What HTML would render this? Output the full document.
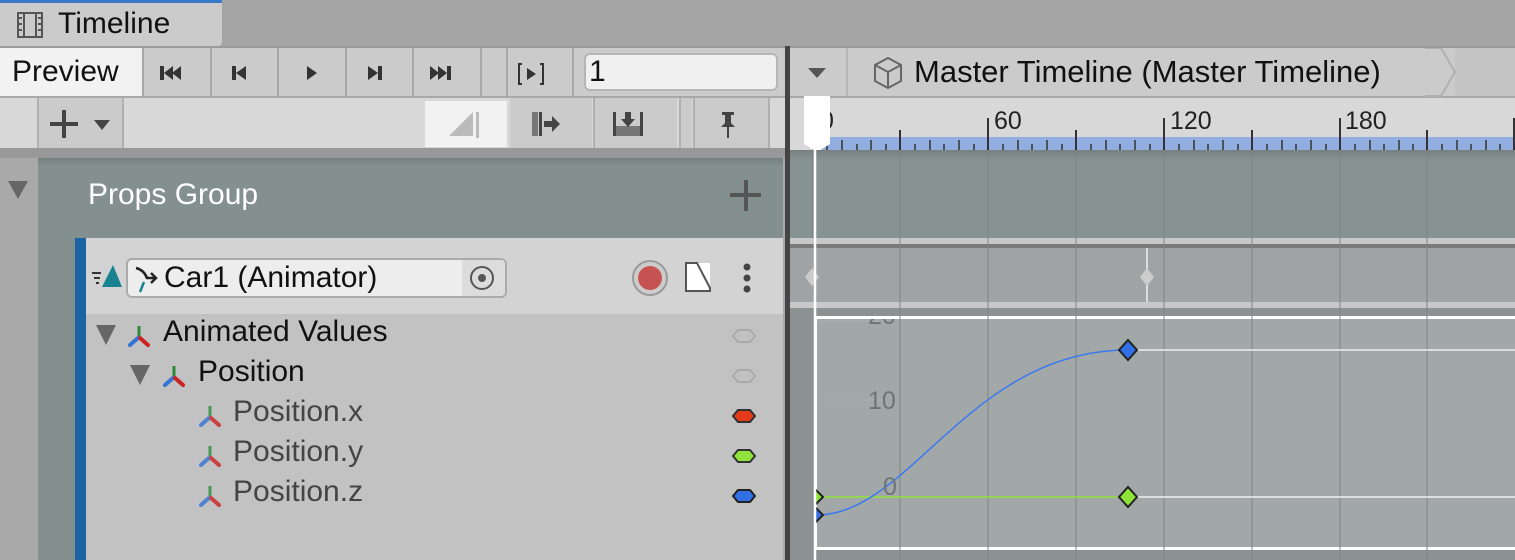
<!DOCTYPE html>
<html><head><style>
*{margin:0;padding:0;box-sizing:border-box}
body{width:1515px;height:560px;overflow:hidden;background:#a5a5a5;font-family:"Liberation Sans",sans-serif;position:relative}
.a{position:absolute}
.t{font-size:30px;color:#111;white-space:nowrap;line-height:34px}
.sep{position:absolute;width:2px;background:#a8a8a8}
.n{font-size:25px;line-height:28px}
</style></head><body>
<!-- tab -->
<div class="a" style="left:0;top:0;width:222px;height:46px;background:#cbcbcb;border-top:3px solid #3a78c9;border-radius:0 0 4px 0"></div>
<svg class="a" style="left:16px;top:11px" width="30" height="28"><rect x="2" y="2" width="24" height="24" fill="none" stroke="#555" stroke-width="2"/><rect x="8" y="2" width="12" height="24" fill="#cbcbcb" stroke="#555" stroke-width="2"/><g fill="#555"><rect x="3" y="6" width="3" height="2"/><rect x="3" y="12" width="3" height="2"/><rect x="3" y="18" width="3" height="2"/><rect x="22" y="6" width="3" height="2"/><rect x="22" y="12" width="3" height="2"/><rect x="22" y="18" width="3" height="2"/></g></svg>
<div class="a t" style="left:58px;top:7px">Timeline</div>
<!-- row1 -->
<div class="a" style="left:0;top:46px;width:1515px;height:52px;background:#cbcbcb;border-top:2px solid #9a9a9a;border-bottom:2px solid #a8a8a8"></div>
<div class="a" style="left:0;top:48px;width:142px;height:48px;background:#f2f2f2"></div>
<div class="a t" style="left:12px;top:55px">Preview</div>
<div class="sep" style="left:142px;top:48px;height:48px"></div>
<div class="sep" style="left:210px;top:48px;height:48px"></div>
<div class="sep" style="left:277px;top:48px;height:48px"></div>
<div class="sep" style="left:345px;top:48px;height:48px"></div>
<div class="sep" style="left:412px;top:48px;height:48px"></div>
<div class="sep" style="left:480px;top:48px;height:48px"></div>
<div class="sep" style="left:506px;top:48px;height:48px"></div>
<div class="sep" style="left:572px;top:48px;height:48px"></div>
<svg class="a" style="left:150px;top:58px" width="640" height="30" fill="#333">
<g transform="translate(10,5)"><rect x="0" y="3" width="4" height="14"/><path d="M4 10 L13 3 V17Z M12 10 L21 3 V17Z"/></g>
<g transform="translate(82,5)"><rect x="0" y="3" width="4" height="14"/><path d="M4 10 L14 3 V17Z"/></g>
<path d="M157 8 L167 15 L157 22Z"/>
<g transform="translate(218,5)"><path d="M0 3 L10 10 L0 17Z"/><rect x="10" y="3" width="4" height="14"/></g>
<g transform="translate(280,5)"><path d="M0 3 L9 10 L0 17Z M8 3 L17 10 L8 17Z"/><rect x="17" y="3" width="4" height="14"/></g>
<g transform="translate(368,4)" fill="none" stroke="#333" stroke-width="2"><path d="M4 2 H1 V22 H4 M22 2 H25 V22 H22"/><path d="M9 6 L18 12 L9 18Z" fill="#333" stroke="none"/></g>
</svg>
<div class="a" style="left:584px;top:53px;width:194px;height:38px;background:#f0f0f0;border:2px solid #b5b5b5;border-radius:6px"></div>
<div class="a t" style="left:589px;top:55px">1</div>
<!-- right header row1 -->
<div class="a" style="left:790px;top:48px;width:725px;height:48px;background:#cbcbcb"></div>
<svg class="a" style="left:806px;top:66px" width="22" height="14"><path d="M2 2 H20 L11 12Z" fill="#555"/></svg>
<div class="sep" style="left:846px;top:48px;height:48px;background:#b5b5b5"></div>
<div class="a" style="left:1455px;top:48px;width:60px;height:48px;background:#c4c4c4"></div>
<svg class="a" style="left:1425px;top:48px" width="40" height="50"><path d="M0 0 L16 0 L30 24 L16 48 L0 48" fill="#cbcbcb" stroke="#b0b0b0" stroke-width="2"/></svg>
<svg class="a" style="left:872px;top:55px" width="34" height="36" fill="none" stroke="#666" stroke-width="2"><path d="M16 3 L29 10 V26 L16 33 L3 26 V10Z M3 10 L16 17 L29 10 M16 17 V33"/></svg>
<div class="a t" style="left:914px;top:55px;font-size:31px">Master Timeline (Master Timeline)</div>
<!-- row2 -->
<div class="a" style="left:0;top:98px;width:786px;height:50px;background:#d8d8d8"></div>
<div class="a" style="left:37px;top:98px;width:87px;height:50px;background:#cbcbcb;border-left:2px solid #b0b0b0;border-right:2px solid #b0b0b0"></div>
<svg class="a" style="left:46px;top:108px" width="70" height="30"><path d="M4 16 H32 M18 2 V30" stroke="#444" stroke-width="4"/><path d="M48 12 H64 L56 22Z" fill="#444"/></svg>
<div class="a" style="left:425px;top:101px;width:82px;height:46px;background:#f2f2f2"></div>
<svg class="a" style="left:445px;top:108px" width="40" height="32"><path d="M4 28 L28 4 V28Z" fill="#bbb"/><rect x="31" y="4" width="3" height="26" fill="#bbb"/></svg>
<div class="a" style="left:510px;top:98px;width:82px;height:50px;background:#cbcbcb"></div>
<div class="a" style="left:593px;top:98px;width:84px;height:50px;background:#cbcbcb;border-left:2px solid #b0b0b0"></div>
<div class="a" style="left:679px;top:98px;width:13px;height:50px;background:#cbcbcb;border-left:2px solid #b0b0b0"></div>
<div class="a" style="left:693px;top:98px;width:77px;height:50px;background:#cbcbcb;border-left:2px solid #b0b0b0;border-right:2px solid #b0b0b0"></div>
<svg class="a" style="left:530px;top:108px" width="250" height="34" fill="#444">
<rect x="2" y="4" width="6" height="24" fill="#777"/><rect x="9" y="4" width="3" height="24"/><path d="M14 13 H22 V8 L30 16 L22 24 V19 H14Z"/>
<rect x="83" y="4" width="3" height="24"/><rect x="110" y="4" width="3" height="24"/><rect x="86" y="18" width="24" height="10" fill="#777"/><path d="M95 4 H101 V11 H105 L98 19 L91 11 H95Z"/>
<path d="M192 4 H204 V7 H201 V15 L205 19 H191 L195 15 V7 H192Z M197 19 H199 V30 H197Z"/>
</svg>
<!-- ruler -->
<div class="a" style="left:790px;top:98px;width:725px;height:52px;background:#d8d8d8"></div>
<div class="a" style="left:812px;top:137px;width:703px;height:13px;background:#92aee0"></div>
<svg class="a" style="left:790px;top:110px" width="725" height="40" stroke="#333" stroke-width="2">
<path d="M110 20 V40 M198 8 V40 M374 8 V40 M462 20 V40 M550 8 V40 M637 20 V40 M724 8 V40 M286 20 V40"/>
<path stroke-width="1.5" d="M37 34V40M52 30V40M67 34V40M81 30V40M96 34V40M125 34V40M140 30V40M154 34V40M169 30V40M184 34V40M213 34V40M228 30V40M242 34V40M257 30V40M272 34V40M301 34V40M316 30V40M330 34V40M345 30V40M360 34V40M389 34V40M404 30V40M418 34V40M433 30V40M448 34V40M477 34V40M492 30V40M506 34V40M521 30V40M536 34V40M565 34V40M580 30V40M594 34V40M609 30V40M623 34V40M652 34V40M667 30V40M681 34V40M696 30V40M710 34V40"/>
</svg>
<div class="a n" style="left:994px;top:107px;color:#222">60</div>
<div class="a n" style="left:1170px;top:107px;color:#222">120</div>
<div class="a n" style="left:1345px;top:107px;color:#222">180</div>
<div class="a n" style="left:820px;top:107px;color:#222">0</div>
<svg class="a" style="left:802px;top:96px" width="30" height="60"><path d="M2 0 H28 V48 L15 56 L2 48Z" fill="#fff"/></svg>
<!-- left body -->
<div class="a" style="left:0;top:148px;width:786px;height:412px;background:#a9a9a9"></div>
<div class="a" style="left:0;top:148px;width:786px;height:10px;background:#989898"></div>
<div class="a" style="left:38px;top:158px;width:745px;height:402px;background:#84908f;border-radius:4px 0 0 0"></div>
<div class="a" style="left:38px;top:158px;width:745px;height:8px;background:linear-gradient(#74807f,#84908f)"></div>
<svg class="a" style="left:8px;top:180px" width="22" height="20"><path d="M0 1 H20 L10 19Z" fill="#666"/></svg>
<div class="a t" style="left:88px;top:178px;color:#fff">Props Group</div>
<svg class="a" style="left:730px;top:180px" width="32" height="32"><path d="M0 15 H31 M16 0 V31" stroke="#555" stroke-width="4"/></svg>
<div class="a" style="left:75px;top:238px;width:708px;height:322px;background:#c2c2c2"></div>
<div class="a" style="left:86px;top:238px;width:697px;height:76px;background:#d3d3d3"></div>
<div class="a" style="left:75px;top:238px;width:11px;height:322px;background:#1b63a2"></div>
<svg class="a" style="left:90px;top:263px" width="34" height="26"><path d="M12 24 L23 2 L32 24Z" fill="#188390"/><path d="M2 10 H11 M4 15 H10 M6 20 H9" stroke="#333" stroke-width="2"/></svg>
<div class="a" style="left:126px;top:258px;width:381px;height:40px;background:#ededed;border:2px solid #aaa;border-radius:6px"></div>
<div class="a" style="left:462px;top:260px;width:43px;height:36px;background:#dcdcdc;border-radius:0 5px 5px 0"></div>
<svg class="a" style="left:468px;top:264px" width="30" height="30"><circle cx="14" cy="14" r="11" fill="none" stroke="#555" stroke-width="2"/><circle cx="14" cy="14" r="4" fill="#555"/></svg>
<svg class="a" style="left:134px;top:266px" width="26" height="28"><path d="M2 2 Q10 4 13 12 L22 12 M17 7 L22 12 L17 17" fill="none" stroke="#222" stroke-width="2.5"/><path d="M10 16 L6 26" stroke="#188390" stroke-width="2.5"/></svg>
<div class="a t" style="left:164px;top:261px">Car1 (Animator)</div>
<svg class="a" style="left:630px;top:258px" width="140" height="40"><circle cx="20" cy="20" r="17" fill="#ccc" stroke="#999" stroke-width="2"/><circle cx="20" cy="20" r="12" fill="#c75252"/><path d="M55 5 H80 V33 H55Z" fill="#fff"/><path d="M56 5 L56 33 H80 L80 30 L67 5Z" fill="none" stroke="#555" stroke-width="2"/><path d="M56 5 V33" stroke="#555" stroke-width="2"/><circle cx="117" cy="9" r="3.5" fill="#444"/><circle cx="117" cy="20" r="3.5" fill="#444"/><circle cx="117" cy="31" r="3.5" fill="#444"/></svg>
<!-- tree -->
<svg class="a" style="left:94px;top:320px" width="690" height="200">
<defs><g id="ax"><path d="M12 1 V11" stroke="#2a8a3a" stroke-width="3"/><path d="M11 13 L3 20" stroke="#3374d6" stroke-width="4" stroke-linecap="round"/><path d="M13 13 L21 20" stroke="#c22" stroke-width="4" stroke-linecap="round"/></g>
<g id="hx"><path d="M0 7 L5 1 H17 L22 7 L17 13 H5Z" stroke-width="2"/></g></defs>
<path d="M2 5 H22 L12 25Z" fill="#666"/>
<path d="M36 45 H56 L46 65Z" fill="#666"/>
<use href="#ax" x="33" y="5"/>
<use href="#ax" x="68" y="45"/>
<use href="#ax" x="104" y="85" opacity=".8"/>
<use href="#ax" x="104" y="125" opacity=".8"/>
<use href="#ax" x="104" y="165" opacity=".8"/>
<use href="#hx" x="639" y="9" fill="none" stroke="#aaa"/>
<use href="#hx" x="639" y="49" fill="none" stroke="#aaa"/>
<use href="#hx" x="639" y="89" fill="#e23a1a" stroke="#333"/>
<use href="#hx" x="639" y="129" fill="#8fe23a" stroke="#333"/>
<use href="#hx" x="639" y="169" fill="#3370e8" stroke="#222"/>
</svg>
<div class="a t" style="left:163px;top:315px">Animated Values</div>
<div class="a t" style="left:198px;top:355px">Position</div>
<div class="a t" style="left:233px;top:395px;color:#444">Position.x</div>
<div class="a t" style="left:233px;top:435px;color:#444">Position.y</div>
<div class="a t" style="left:233px;top:475px;color:#444">Position.z</div>
<!-- divider -->
<div class="a" style="left:785px;top:46px;width:5px;height:514px;background:#444"></div>
<!-- right body -->
<div class="a" style="left:790px;top:150px;width:725px;height:410px;background:#8a8f8f"></div>
<div class="a" style="left:790px;top:150px;width:725px;height:90px;background:#879292"></div>
<div class="a" style="left:790px;top:150px;width:725px;height:10px;background:linear-gradient(#777f7f,#879292)"></div>
<div class="a" style="left:790px;top:238px;width:725px;height:6px;background:#c8c8c8"></div>
<div class="a" style="left:790px;top:244px;width:725px;height:4px;background:#7a7a7a"></div>
<div class="a" style="left:790px;top:248px;width:725px;height:54px;background:#9fa3a3"></div>
<div class="a" style="left:790px;top:302px;width:725px;height:6px;background:#c8c8c8"></div>
<div class="a" style="left:790px;top:308px;width:725px;height:252px;background:#8c9191"></div>
<div class="a" style="left:814px;top:316px;width:701px;height:234px;background:#a2a8a8;border:3px solid #fff;border-right:none"></div>
<svg class="a" style="left:790px;top:150px" width="725" height="410">
<g stroke="#7c8585" stroke-width="1"><path d="M22 0V88M110 0V410M198 0V410M286 0V410M374 0V410M462 0V410M550 0V410M637 0V410"/></g>
<path d="M357 98 V152" stroke="#ddd" stroke-width="2"/>
<path d="M22 118 L29 127 L22 136 L15 127Z M357 118 L364 127 L357 136 L350 127Z" fill="#ccc"/>
<path d="M28 171 H95 M28 250 H95" stroke="#aab0b0" stroke-width="1"/>
<path d="M27 347 H338" stroke="#8fe23a" stroke-width="1.5"/>
<path d="M27 365 C120 365 180 200 338 200" stroke="#3a78f0" stroke-width="1.5" fill="none"/>
<path d="M346 200 H725 M346 347 H725" stroke="#eee" stroke-width="1.5"/>
<path d="M338 190 L347 200 L338 210 L329 200Z" fill="#3370e8" stroke="#222" stroke-width="2"/>
<path d="M338 337 L347 347 L338 357 L329 347Z" fill="#8fe23a" stroke="#222" stroke-width="2"/>
<path d="M25 339 L33 347 L25 355Z" fill="#8fe23a" stroke="#222" stroke-width="2"/>
<path d="M25 357 L33 365 L25 373Z" fill="#3370e8" stroke="#222" stroke-width="2"/>
<path d="M25 0 V410" stroke="#fff" stroke-width="2.5"/>
</svg>
<div class="a" style="left:868px;top:319px;width:60px;height:10px;overflow:hidden"><div class="n" style="position:relative;top:-17px;color:#6e7474">20</div></div>
<div class="a n" style="left:868px;top:387px;color:#6e7474">10</div>
<div class="a n" style="left:883px;top:473px;color:#6e7474">0</div>
</body></html>
